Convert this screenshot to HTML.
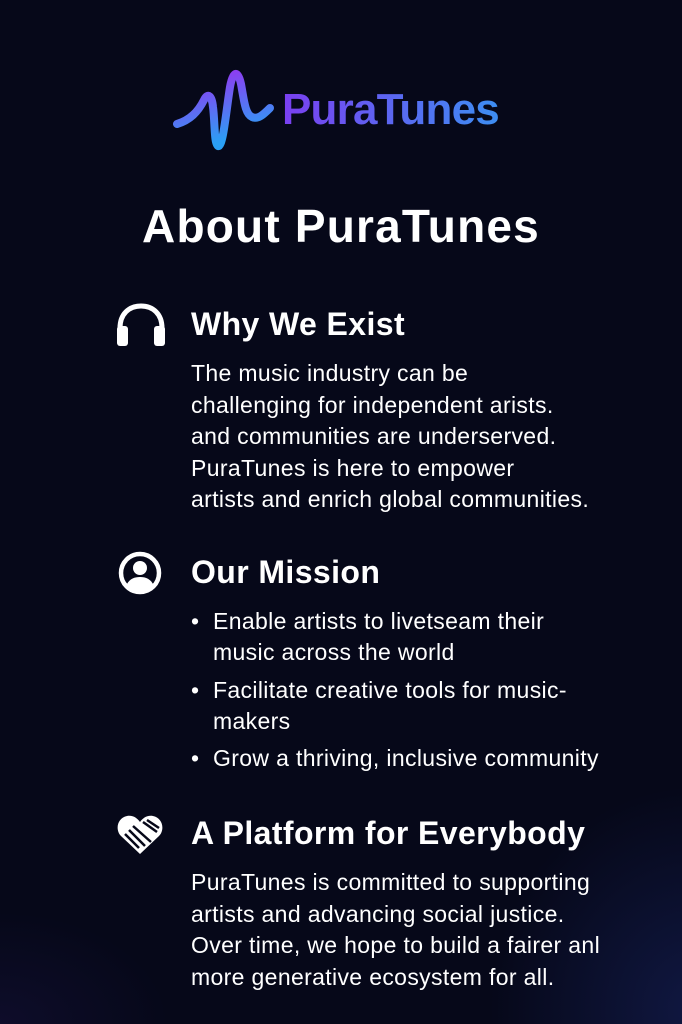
<!DOCTYPE html>
<html><head><meta charset="utf-8"><style>
html,body{margin:0;padding:0}
body{width:682px;height:1024px;overflow:hidden;position:relative;font-family:"Liberation Sans",sans-serif;color:#fff;
background:radial-gradient(ellipse 300px 320px at 700px 1010px,rgba(40,60,160,0.3),transparent 70%),radial-gradient(ellipse 240px 160px at 0px 1024px,rgba(60,40,140,0.15),transparent 70%),#060819;}
.abs{position:absolute}
.logo-t{left:282px;top:80px;font-size:44px;font-weight:bold;letter-spacing:-0.8px;background:linear-gradient(90deg,#7a3ff0,#3d8ef2);-webkit-background-clip:text;background-clip:text;color:transparent;line-height:60px}
h1{position:absolute;left:0;width:682px;text-align:center;top:196px;margin:0;font-size:46px;letter-spacing:1.2px;line-height:60px;font-weight:bold}
h2{position:absolute;left:191px;margin:0;font-size:32px;letter-spacing:0.4px;font-weight:bold;line-height:40px}
.p{position:absolute;left:191px;font-size:23px;letter-spacing:0.35px;line-height:31.5px;white-space:nowrap}
.b{position:absolute;left:191px;font-size:23px;letter-spacing:0.35px;line-height:31px;white-space:nowrap}
.b span{position:absolute;left:0}
.b div{padding-left:22px}
</style></head><body>
<svg class="abs" style="left:170px;top:62px" width="110" height="95" viewBox="0 0 110 95">
<defs><linearGradient id="g" x1="0" y1="0" x2="0.3" y2="1"><stop offset="0" stop-color="#9b2ff0"/><stop offset="1" stop-color="#2aa0f5"/></linearGradient></defs>
<path d="M7 62 C20 58 28 50 34 38 C38 30 42 34 43 45 C45 60 44 82 48 84 C53 86 56 50 60 25 C63 8 68 8 71 22 C74 38 75 52 82 55 C88 58 94 52 100 46" fill="none" stroke="url(#g)" stroke-width="8" stroke-linecap="round" stroke-linejoin="round"/>
</svg>
<div class="abs logo-t">PuraTunes</div>
<h1>About PuraTunes</h1>

<svg class="abs" style="left:114px;top:302px" width="54" height="46" viewBox="0 0 54 46">
<path d="M6 36 V26 C6 12 15 4 27 4 C39 4 48 12 48 26 V36" fill="none" stroke="#fff" stroke-width="5"/>
<rect x="3" y="24" width="11" height="20" rx="3" fill="#fff"/><rect x="40" y="24" width="11" height="20" rx="3" fill="#fff"/>
</svg>
<h2 style="top:304px">Why We Exist</h2>
<div class="p" style="top:358px">The music industry can be<br>challenging for independent arists.<br>and communities are underserved.<br>PuraTunes is here to empower<br>artists and enrich global communities.</div>

<svg class="abs" style="left:117px;top:550px" width="46" height="46" viewBox="0 0 46 46">
<circle cx="23" cy="23" r="19" fill="none" stroke="#fff" stroke-width="4.5"/>
<circle cx="23" cy="18" r="7" fill="#fff"/>
<path d="M9 36 C12 29 17 27 23 27 C29 27 34 29 37 36 C33 40 28 42 23 42 C18 42 13 40 9 36Z" fill="#fff"/>
</svg>
<h2 style="top:552px">Our Mission</h2>
<div class="b" style="top:606px"><span>•</span><div>Enable artists to livetseam their<br>music across the world</div></div>
<div class="b" style="top:675px"><span>•</span><div>Facilitate creative tools for music-<br>makers</div></div>
<div class="b" style="top:743px"><span>•</span><div>Grow a thriving, inclusive community</div></div>

<svg class="abs" style="left:115px;top:812px" width="50" height="44" viewBox="0 0 50 44">
<path d="M25 42 L6 24 C0 18 2 6 12 4 C18 3 22 6 25 10 C28 6 32 3 38 4 C48 6 50 18 44 24Z" fill="#fff"/>
<g stroke="#060819" stroke-width="2.5"><path d="M14 18 L30 34 M18 14 L36 30 M10 22 L24 36 M28 10 L42 20 M32 8 L44 16"/></g>
</svg>
<h2 style="top:813px">A Platform for Everybody</h2>
<div class="p" style="top:867px">PuraTunes is committed to supporting<br>artists and advancing social justice.<br>Over time, we hope to build a fairer anl<br>more generative ecosystem for all.</div>
</body></html>
